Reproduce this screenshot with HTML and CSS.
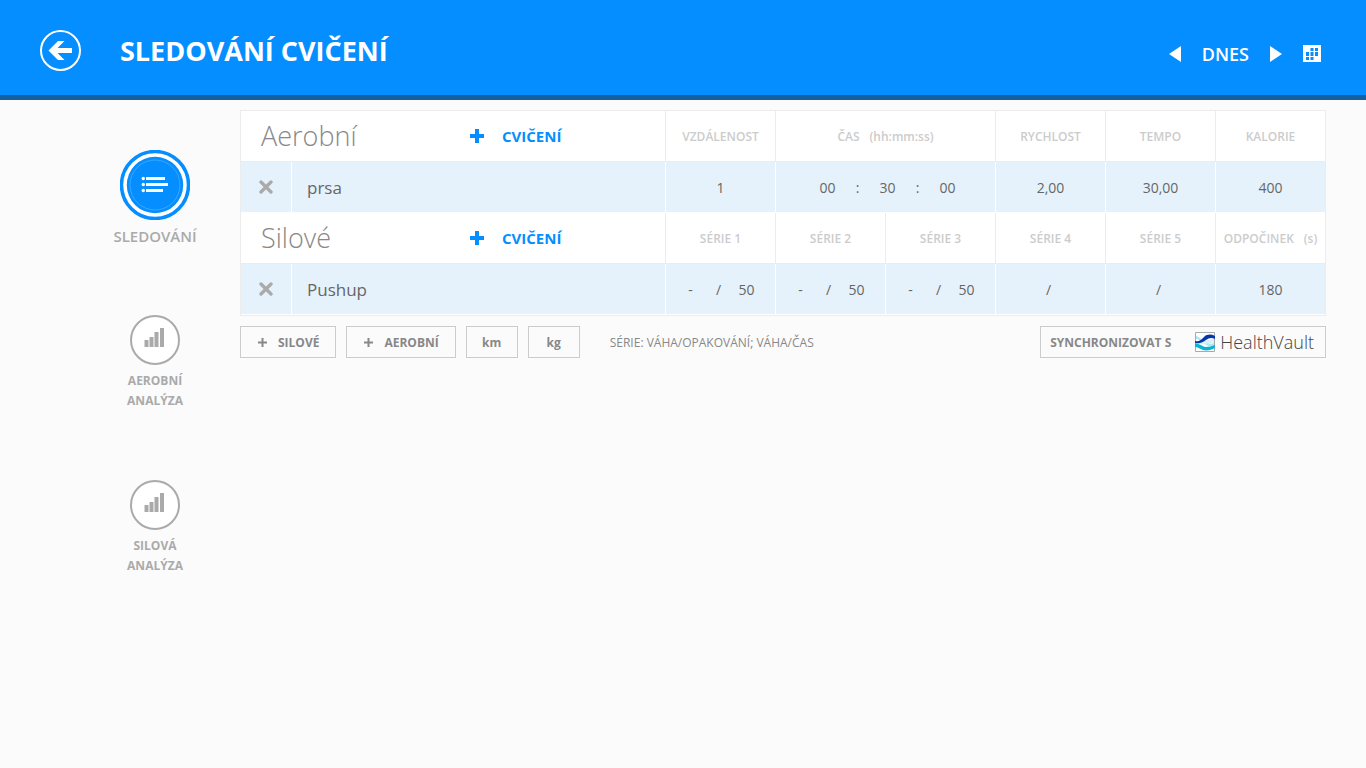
FILE: index.html
```html
<!DOCTYPE html>
<html lang="cs">
<head>
<meta charset="utf-8">
<title>Sledování cvičení</title>
<link rel="stylesheet" href="styles.css">
</head>
<body>
<header class="topbar">
  <button class="back" type="button" aria-label="Zpět">
    <svg width="42" height="42" viewBox="0 0 42 42"><circle cx="20.500" cy="20.500" r="19.500" fill="none" stroke="#fff" stroke-width="2"/><path d="M8.500 20.500L18 11h6.500l-7 7H32v5H17.500l7 7H18z" fill="#fff"/></svg>
  </button>
  <h1 class="title">SLEDOVÁNÍ CVIČENÍ</h1>
  <div class="datenav">
    <button type="button" aria-label="Předchozí den"><svg width="12" height="16" viewBox="0 0 12 16"><path d="M12 0v16L0 8z" fill="#fff"/></svg></button>
    <button class="today" type="button">DNES</button>
    <button type="button" aria-label="Další den"><svg width="12" height="16" viewBox="0 0 12 16"><path d="M0 0v16l12-8z" fill="#fff"/></svg></button>
    <button class="calendar" type="button" aria-label="Kalendář"><svg width="18" height="17" viewBox="0 0 18 17"><path d="M0 0h18v17H0z" fill="#fff"/><path d="M7.500 3h3v3h-3zM12 3h3v3h-3zM3 7h3v4H3zM7.500 7h3v4h-3zM12 7h3v4h-3zM3 12h3v3H3zM7.500 12h3v3h-3z" fill="#058eff"/></svg></button>
  </div>
</header>
<div class="layout">
  <nav class="sidebar">
    <a class="navitem active" href="#sledovani">
      <svg width="70" height="70" viewBox="0 0 70 70"><circle cx="35" cy="35" r="33.500" fill="#fff" stroke="#058eff" stroke-width="3.500"/><circle cx="35" cy="35" r="28.200" fill="#058eff"/><circle cx="35" cy="35" r="25" fill="none" stroke="#4db0ff" stroke-width="0.700"/><path d="M26 27h19v3H26zM26 33h22v3H26zM26 39h17v3H26z" fill="#fff"/><g fill="#fff"><circle cx="23.300" cy="28.500" r="1.700"/><circle cx="23.300" cy="34.500" r="1.700"/><circle cx="23.300" cy="40.500" r="1.700"/></g></svg>
      <span>SLEDOVÁNÍ</span>
    </a>
    <a class="navitem" href="#aerobni">
      <svg width="50" height="50" viewBox="0 0 50 50"><circle cx="25" cy="25" r="24" fill="#fff" stroke="#aaa" stroke-width="2"/><path d="M14.500 25h4v7h-4zM19.500 22h4v10h-4zM24.500 17h4v15h-4zM30 13h4v19h-4z" fill="#aaa"/></svg>
      <span>AEROBNÍ<br>ANALÝZA</span>
    </a>
    <a class="navitem" href="#silova">
      <svg width="50" height="50" viewBox="0 0 50 50"><circle cx="25" cy="25" r="24" fill="#fff" stroke="#aaa" stroke-width="2"/><path d="M14.500 25h4v7h-4zM19.500 22h4v10h-4zM24.500 17h4v15h-4zM30 13h4v19h-4z" fill="#aaa"/></svg>
      <span>SILOVÁ<br>ANALÝZA</span>
    </a>
  </nav>
  <main class="content">
    <table class="log">
      <colgroup><col class="c-del"><col><col class="c-val"><col class="c-val"><col class="c-val"><col class="c-val"><col class="c-val"><col class="c-last"></colgroup>
      <tbody>
        <tr class="head">
          <th colspan="2" scope="col"><div class="section"><span class="name">Aerobní</span><button class="add" type="button"><svg width="16" height="14" viewBox="0 0 16 14"><path d="M6 0h4v5h5v4h-5v5H6V9H1V5h5z" fill="#058eff"/></svg>CVIČENÍ</button></div></th>
          <th scope="col">VZDÁLENOST</th>
          <th scope="col" colspan="2">ČAS<span class="unit">(hh:mm:ss)</span></th>
          <th scope="col">RYCHLOST</th>
          <th scope="col">TEMPO</th>
          <th scope="col">KALORIE</th>
        </tr>
        <tr class="row">
          <td><button class="del" type="button" aria-label="Odstranit prsa"><svg width="14" height="14" viewBox="0 0 14 14"><path d="M2 2l10 10M12 2L2 12" stroke="#aaa" stroke-width="3.300" stroke-linecap="round"/></svg></button></td>
          <td class="exercise">prsa</td>
          <td><input class="num" type="text" value="1" aria-label="Vzdálenost"></td>
          <td colspan="2"><div class="time"><input class="num" type="text" value="00" aria-label="Hodiny"><span>:</span><input class="num" type="text" value="30" aria-label="Minuty"><span>:</span><input class="num" type="text" value="00" aria-label="Sekundy"></div></td>
          <td>2,00</td>
          <td>30,00</td>
          <td><input class="num" type="text" value="400" aria-label="Kalorie"></td>
        </tr>
      </tbody>
      <tbody>
        <tr class="head">
          <th colspan="2" scope="col"><div class="section"><span class="name">Silové</span><button class="add" type="button"><svg width="16" height="14" viewBox="0 0 16 14"><path d="M6 0h4v5h5v4h-5v5H6V9H1V5h5z" fill="#058eff"/></svg>CVIČENÍ</button></div></th>
          <th scope="col">SÉRIE 1</th>
          <th scope="col">SÉRIE 2</th>
          <th scope="col">SÉRIE 3</th>
          <th scope="col">SÉRIE 4</th>
          <th scope="col">SÉRIE 5</th>
          <th scope="col">ODPOČINEK<span class="unit">(s)</span></th>
        </tr>
        <tr class="row">
          <td><button class="del" type="button" aria-label="Odstranit Pushup"><svg width="14" height="14" viewBox="0 0 14 14"><path d="M2 2l10 10M12 2L2 12" stroke="#aaa" stroke-width="3.300" stroke-linecap="round"/></svg></button></td>
          <td class="exercise">Pushup</td>
          <td><div class="set"><input class="num" type="text" value="-" aria-label="Série 1 váha"><span>/</span><input class="num" type="text" value="50" aria-label="Série 1 opakování"></div></td>
          <td><div class="set"><input class="num" type="text" value="-" aria-label="Série 2 váha"><span>/</span><input class="num" type="text" value="50" aria-label="Série 2 opakování"></div></td>
          <td><div class="set"><input class="num" type="text" value="-" aria-label="Série 3 váha"><span>/</span><input class="num" type="text" value="50" aria-label="Série 3 opakování"></div></td>
          <td><div class="set"><input class="num" type="text" value="" aria-label="Série 4 váha"><span>/</span><input class="num" type="text" value="" aria-label="Série 4 opakování"></div></td>
          <td><div class="set"><input class="num" type="text" value="" aria-label="Série 5 váha"><span>/</span><input class="num" type="text" value="" aria-label="Série 5 opakování"></div></td>
          <td><input class="num" type="text" value="180" aria-label="Odpočinek"></td>
        </tr>
      </tbody>
    </table>
    <div class="actions">
      <button class="btn" type="button"><svg width="9" height="9" viewBox="0 0 9 9"><path d="M3.500 0h2v3.500H9v2H5.500V9h-2V5.500H0v-2h3.500z" fill="#888"/></svg>SILOVÉ</button>
      <button class="btn" type="button"><svg width="9" height="9" viewBox="0 0 9 9"><path d="M3.500 0h2v3.500H9v2H5.500V9h-2V5.500H0v-2h3.500z" fill="#888"/></svg>AEROBNÍ</button>
      <button class="btn unitbtn" type="button">km</button>
      <button class="btn unitbtn" type="button">kg</button>
      <span class="note">SÉRIE: VÁHA/OPAKOVÁNÍ; VÁHA/ČAS</span>
      <button class="btn sync" type="button">SYNCHRONIZOVAT S
        <span class="vault"><svg width="20" height="20" viewBox="0 0 20 20"><path d="M.5.5h19v19H.5z" fill="#fff" stroke="#aaa"/><path d="M1 4c3 0 5 4 9 6s7 2 9 1v3c-5 1-8-1-11-3S4 7 1 7z" fill="#b5e3ee"/><path d="M1 9c5 2 9 0 12-1s5-1 6-1v4c-5-1-9 3-18 1z" fill="#d5f0f7"/><path d="M0 9c4 1 6-1 9-4s7-3 11-1v3c-4-2-6-1-9 1s-6 4-11 3z" fill="#0537a8"/><path d="M0 12c4-1 6 2 10 3 4 0 7-1 10-2v3c-4 2-8 3-12 2-3-1-5-3-8-3z" fill="#08b3d6"/></svg>HealthVault</span>
      </button>
    </div>
  </main>
</div>
</body>
</html>
```
FILE: styles.css
```css
* { box-sizing: border-box; }

body {
  margin: 0;
  min-height: 100vh;
  background: #fbfbfb;
  color: #666;
  font-family: "Open Sans", "Noto Sans", sans-serif;
  font-size: 14px;
}

button {
  display: flex;
  align-items: center;
  padding: 0;
  border: 0;
  background: none;
  color: inherit;
  font: inherit;
  cursor: pointer;
}

svg { display: block; flex: none; }

.topbar {
  display: flex;
  align-items: center;
  height: 100px;
  padding: 6px 45px 0 40px;
  border-bottom: 5px solid #165f9f;
  background: #058eff;
  color: #fff;
}

.title {
  margin: 0 0 0 38px;
  font-size: 27px;
  font-weight: 700;
  line-height: 36px;
}

.datenav {
  display: flex;
  align-items: center;
  gap: 21px;
  margin: 6px 0 0 auto;
}

.today { font-size: 18px; font-weight: 600; line-height: 24px; }

.layout { display: flex; }

.sidebar {
  flex: none;
  width: 240px;
  padding: 50px 0 0 70px;
}

.navitem {
  display: flex;
  flex-direction: column;
  align-items: center;
  gap: 6px;
  height: 165px;
  color: #aaa;
  font-size: 12px;
  font-weight: 700;
  line-height: 20px;
  text-align: center;
  text-decoration: none;
}

.navitem.active { font-size: 15px; font-weight: 600; }

.content { flex: 1; min-width: 0; padding: 10px 40px 40px 0; }

.log {
  width: 100%;
  table-layout: fixed;
  border: 1px solid #ececec;
  border-collapse: separate;
  border-spacing: 0;
  background: #fff;
}

.c-del { width: 51px; }
.c-val { width: 110px; }
.c-last { width: 109px; }

.log th, .log td {
  height: 51px;
  padding: 0;
  border-bottom: 1px solid #ececec;
  border-right: 1px solid #ececec;
  text-align: center;
}

.log th {
  color: #ccc;
  font-size: 12px;
  font-weight: 600;
  white-space: nowrap;
}

.log td { border-color: #fff; background: #e5f2fc; }
.log tr > :last-child { border-right: 0; }

.section { display: flex; align-items: center; padding-left: 20px; }

.name {
  width: 208px;
  color: #888;
  font-size: 27px;
  font-weight: 300;
  line-height: 36px;
  text-align: left;
}

.add { gap: 17px; color: #058eff; font-size: 15px; font-weight: 700; line-height: 20px; }

.unit { margin-left: 10px; }
.del { width: 100%; justify-content: center; }

.log .exercise { padding-left: 15px; font-size: 17px; text-align: left; }

.num {
  width: 100%;
  min-width: 0;
  height: 30px;
  padding: 0;
  border: 0;
  background: none;
  color: inherit;
  font: inherit;
  text-align: center;
}

.time, .set { display: flex; align-items: center; justify-content: center; padding-right: 4px; }
.time { padding: 0 0 0 4px; }
.time .num { width: 50px; }
.set .num { width: 46px; }
.time span, .set span { width: 10px; }

.actions { display: flex; align-items: center; gap: 10px; margin-top: 10px; }

.btn {
  gap: 11px;
  height: 32px;
  padding: 0 16px 0 17px;
  border: 1px solid #ccc;
  color: #888;
  font-size: 12px;
  font-weight: 700;
  white-space: nowrap;
}

.unitbtn { justify-content: center; width: 52px; padding: 0; }
.note { margin-left: 20px; font-size: 12px; color: #888; }
.sync { gap: 24px; margin-left: auto; padding: 0 11px 0 9px; }

.vault {
  display: flex;
  align-items: center;
  gap: 5px;
  color: #444;
  font-size: 18px;
  font-weight: 300;
}
```
